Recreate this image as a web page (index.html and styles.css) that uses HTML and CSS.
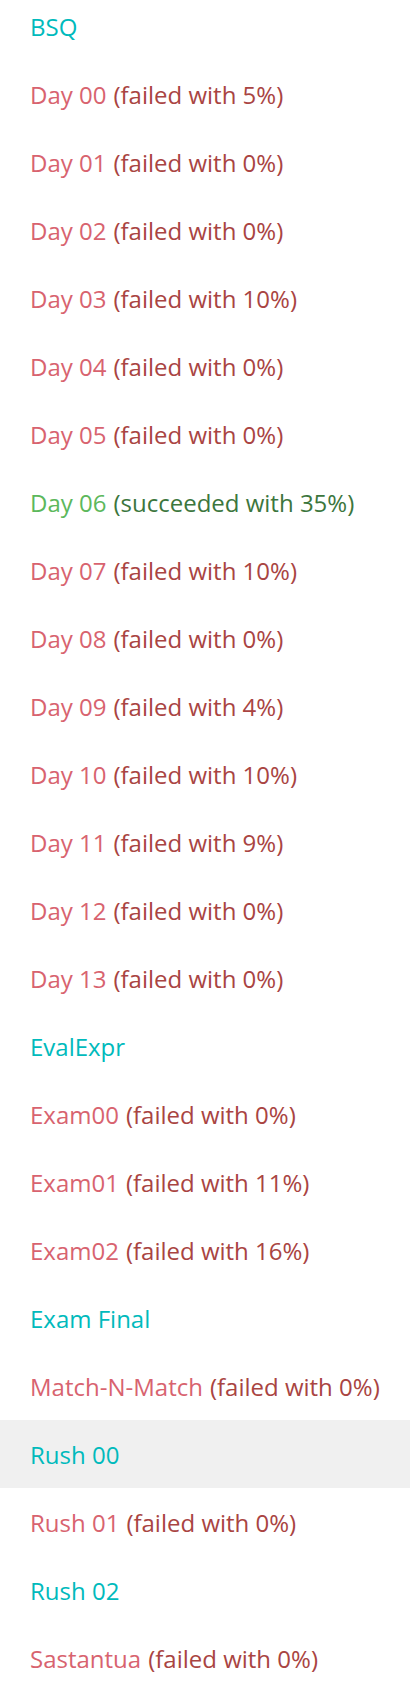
FILE: index.html
```html
<!DOCTYPE html>
<html>
<head>
<meta charset="utf-8">
<link rel="stylesheet" href="styles.css">
</head>
<body>
<ul class="projects">
  <li class="item"><span class="name neutral">BSQ</span></li>
  <li class="item"><span class="name fail">Day 00</span> <span class="mark fail">(failed with 5%)</span></li>
  <li class="item"><span class="name fail">Day 01</span> <span class="mark fail">(failed with 0%)</span></li>
  <li class="item"><span class="name fail">Day 02</span> <span class="mark fail">(failed with 0%)</span></li>
  <li class="item"><span class="name fail">Day 03</span> <span class="mark fail">(failed with 10%)</span></li>
  <li class="item"><span class="name fail">Day 04</span> <span class="mark fail">(failed with 0%)</span></li>
  <li class="item"><span class="name fail">Day 05</span> <span class="mark fail">(failed with 0%)</span></li>
  <li class="item"><span class="name success">Day 06</span> <span class="mark success">(succeeded with 35%)</span></li>
  <li class="item"><span class="name fail">Day 07</span> <span class="mark fail">(failed with 10%)</span></li>
  <li class="item"><span class="name fail">Day 08</span> <span class="mark fail">(failed with 0%)</span></li>
  <li class="item"><span class="name fail">Day 09</span> <span class="mark fail">(failed with 4%)</span></li>
  <li class="item"><span class="name fail">Day 10</span> <span class="mark fail">(failed with 10%)</span></li>
  <li class="item"><span class="name fail">Day 11</span> <span class="mark fail">(failed with 9%)</span></li>
  <li class="item"><span class="name fail">Day 12</span> <span class="mark fail">(failed with 0%)</span></li>
  <li class="item"><span class="name fail">Day 13</span> <span class="mark fail">(failed with 0%)</span></li>
  <li class="item"><span class="name neutral">EvalExpr</span></li>
  <li class="item"><span class="name fail">Exam00</span> <span class="mark fail">(failed with 0%)</span></li>
  <li class="item"><span class="name fail">Exam01</span> <span class="mark fail">(failed with 11%)</span></li>
  <li class="item"><span class="name fail">Exam02</span> <span class="mark fail">(failed with 16%)</span></li>
  <li class="item"><span class="name neutral">Exam Final</span></li>
  <li class="item"><span class="name fail">Match-N-Match</span> <span class="mark fail">(failed with 0%)</span></li>
  <li class="item hover"><span class="name neutral">Rush 00</span></li>
  <li class="item"><span class="name fail">Rush 01</span> <span class="mark fail">(failed with 0%)</span></li>
  <li class="item"><span class="name neutral">Rush 02</span></li>
  <li class="item"><span class="name fail">Sastantua</span> <span class="mark fail">(failed with 0%)</span></li>
</ul>
</body>
</html>
```

FILE: styles.css
```css
html, body {
  margin: 0;
  padding: 0;
  background: #ffffff;
}
body {
  font-family: "Open Sans", "Liberation Sans", sans-serif;
  font-size: 24px;
  overflow: hidden;
}
.projects {
  list-style: none;
  margin: -8px 0 0 0;
  padding: 0;
}
.item {
  display: flex;
  align-items: center;
  gap: 7px;
  height: 68px;
  padding-left: 30px;
  white-space: nowrap;
}
.item.hover {
  background: #f0f0f0;
}
.name.neutral { color: #00babc; }
.name.fail { color: #d8636f; }
.name.success { color: #5cb85c; }
.mark.fail { color: #a94442; }
.mark.success { color: #3c763d; }
```
